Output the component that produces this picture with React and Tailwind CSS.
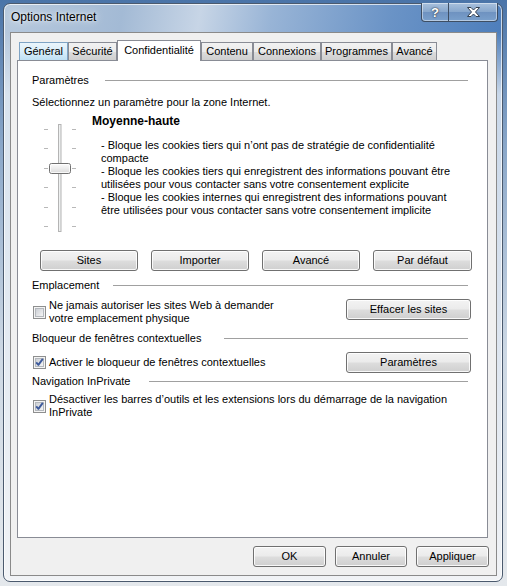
function Btn({ children, className = "" }) {
  return (
    <div
      className={`h-[21px] flex items-center justify-center rounded-[3px] border border-[#707070] bg-[linear-gradient(180deg,#f3f3f3_0%,#ebebeb_48%,#dddddd_52%,#cfcfcf_100%)] shadow-[inset_0_0_0_1px_rgba(255,255,255,0.85)] text-[11px] leading-[13px] text-black ${className}`}
    >
      {children}
    </div>
  );
}

function Check({ checked }) {
  return (
    <svg width="13" height="13" viewBox="0 0 13 13" className="shrink-0">
      <defs>
        <linearGradient id="cbg" x1="0" y1="0" x2="1" y2="1">
          <stop offset="0" stopColor="#c9cdd3" />
          <stop offset="1" stopColor="#f7f7f7" />
        </linearGradient>
      </defs>
      <rect x="0.5" y="0.5" width="12" height="12" fill="#f4f4f4" stroke="#8e8f8f" />
      <rect x="2.5" y="2.5" width="8" height="8" fill="url(#cbg)" stroke="#b4b8bd" />
      {checked && (
        <path
          d="M3.2 6.4 L5.4 8.9 L9.8 2.9"
          stroke="#3d5a9c"
          strokeWidth="1.9"
          fill="none"
          strokeLinejoin="round"
        />
      )}
    </svg>
  );
}

function Legend({ children, w }) {
  return (
    <div className="flex items-center h-[13px] mr-[3px]">
      <span className={`${w} shrink-0 leading-[13px]`}>{children}</span>
      <div className="flex-1 h-px bg-[#a0a0a0]" />
    </div>
  );
}

function Tab({ children, w, blue }) {
  return (
    <div
      className={`${w} h-[18px] flex items-center justify-center border border-b-0 ${
        blue
          ? "border-[#7ea3c4] bg-[linear-gradient(180deg,#eaf5fc_0%,#d9edf9_50%,#bfe0f4_100%)]"
          : "border-[#898c95] bg-[linear-gradient(180deg,#f2f2f2_0%,#ebebeb_50%,#dddddd_51%,#cfcfcf_100%)]"
      } text-[11px] leading-[13px]`}
    >
      {children}
    </div>
  );
}

function Slider() {
  const ticks = [16, 35, 55, 74, 94, 113];
  return (
    <svg width="60" height="122" viewBox="0 0 60 122" className="shrink-0">
      <defs>
        <linearGradient id="thumb" x1="0" y1="0" x2="0" y2="1">
          <stop offset="0" stopColor="#fdfdfd" />
          <stop offset="0.5" stopColor="#ececec" />
          <stop offset="1" stopColor="#d9d9d9" />
        </linearGradient>
      </defs>
      {ticks.map((y) => (
        <g key={y}>
          <rect x="12" y={y} width="4" height="1" fill="#b8b8b8" />
          <rect x="40" y={y} width="4" height="1" fill="#b8b8b8" />
        </g>
      ))}
      <rect x="26.5" y="11.5" width="2.5" height="107" fill="#eef0f0" stroke="#b4b4b4" />
      <rect x="17.5" y="50.5" width="21" height="10" rx="2" fill="url(#thumb)" stroke="#707070" />
      <rect x="18.5" y="51.5" width="19" height="8" rx="1" fill="none" stroke="#ffffff" strokeOpacity="0.8" />
    </svg>
  );
}

export default function App() {
  return (
    <div className="w-[507px] h-[586px] overflow-hidden pt-[3px] pl-[3px] bg-[linear-gradient(180deg,#4a74a8_0%,#8aa7c9_25%,#cdd8e4_60%,#e4e8ec_100%)] font-['Liberation_Sans',Arial,sans-serif] text-black">
      <div className="w-[500px] h-[579px] rounded-[7px] border border-[#4b5a6e] shadow-[inset_0_0_0_1px_rgba(255,255,255,0.7)] bg-[linear-gradient(180deg,rgba(240,244,248,0)_0px,rgba(240,244,248,0)_28px,rgba(222,231,241,0.85)_90px,#f1f3f6_100%),linear-gradient(100deg,#b7c9dd_0%,#a3bad5_20%,#c7d5e6_33%,#98b4d6_45%,#6a93c6_65%,#4c7dbb_85%,#4577b6_100%)] flex flex-col">
        {/* title bar */}
        <div className="h-[28px] flex justify-between items-start shrink-0">
          <div className="pl-[7px] h-[26px] leading-[26px] text-[12px] text-black [text-shadow:0_0_8px_rgba(255,255,255,0.95),0_0_3px_rgba(255,255,255,0.8)]">
            Options Internet
          </div>
          <div className="-mt-px mr-[4px] flex h-[19px] rounded-b-[4px] border border-[#3e4e63] border-t-0 overflow-hidden shadow-[inset_0_0_0_1px_rgba(255,255,255,0.45)] bg-[linear-gradient(180deg,#a9c1dd_0%,#86a6cc_50%,#6e92c0_51%,#7aa0cc_100%)]">
            <div className="w-[27px] h-full flex items-center justify-center border-r border-[#3e4e63] text-white font-bold text-[13px] leading-none [text-shadow:0_0_1px_#2a3340,0_0_2px_#2a3340]">
              ?
            </div>
            <div className="w-[48px] h-full flex items-center justify-center">
              <svg width="15" height="12" viewBox="0 0 15 12">
                <path
                  d="M1.5 1.5 H5 L7.5 4 L10 1.5 H13.5 L9.5 6 L13.5 10.5 H10 L7.5 8 L5 10.5 H1.5 L5.5 6 Z"
                  fill="#ffffff"
                  stroke="#34404f"
                  strokeWidth="1"
                  strokeLinejoin="round"
                />
              </svg>
            </div>
          </div>
        </div>

        {/* client area */}
        <div className="ml-[6px] w-[487px] h-[544px] border border-[#8a8a8a] bg-[#f0f0f0] flex flex-col">
          <div className="pt-[7px] pl-[6px]">
            {/* tabs */}
            <div className="flex items-end pl-[2px] h-[20px]">
              <Tab w="w-[49px]" blue>Général</Tab>
              <Tab w="w-[49px]">Sécurité</Tab>
              <div className="relative z-10 -mb-px w-[84px] h-[21px] flex items-center justify-center border border-b-0 border-[#898c95] bg-white text-[11px] leading-[13px] pb-[2px]">
                Confidentialité
              </div>
              <Tab w="w-[52px]">Contenu</Tab>
              <Tab w="w-[68px]">Connexions</Tab>
              <Tab w="w-[71px]">Programmes</Tab>
              <Tab w="w-[45px]">Avancé</Tab>
            </div>

            {/* panel */}
            <div className="w-[471px] h-[478px] border border-[#898c95] bg-white pl-[14px] pr-[16px] text-[11px] leading-[13px] flex flex-col">
              <div className="mt-[13px]">
                <Legend w="w-[73px]">Paramètres</Legend>
              </div>
              <div className="mt-[9px] h-[13px]">
                Sélectionnez un paramètre pour la zone Internet.
              </div>

              <div className="mt-[4px] flex">
                <Slider />
                <div className="flex flex-col">
                  <div className="h-[16px] leading-[16px] text-[12px] font-bold">Moyenne-haute</div>
                  <div className="mt-[10px] ml-[9px] leading-[13px]">
                    - Bloque les cookies tiers qui n’ont pas de stratégie de confidentialité
                    <br />
                    compacte
                    <br />- Bloque les cookies tiers qui enregistrent des informations pouvant être
                    <br />
                    utilisées pour vous contacter sans votre consentement explicite
                    <br />- Bloque les cookies internes qui enregistrent des informations pouvant
                    <br />
                    être utilisées pour vous contacter sans votre consentement implicite
                  </div>
                </div>
              </div>

              <div className="mt-[15px] ml-[8px] grid grid-cols-[98px_98px_98px_99px] gap-x-[13px] w-[432px]">
                <Btn>Sites</Btn>
                <Btn>Importer</Btn>
                <Btn>Avancé</Btn>
                <Btn>Par défaut</Btn>
              </div>

              <div className="mt-[8px]">
                <Legend w="w-[81px]">Emplacement</Legend>
              </div>
              <div className="mt-[7px] flex items-start justify-between">
                <div className="flex items-center ml-px">
                  <Check />
                  <div className="ml-[3px] leading-[13px]">
                    Ne jamais autoriser les sites Web à demander
                    <br />
                    votre emplacement physique
                  </div>
                </div>
                <Btn className="w-[125px]">Effacer les sites</Btn>
              </div>

              <div className="mt-[7px]">
                <Legend w="w-[192px]">Bloqueur de fenêtres contextuelles</Legend>
              </div>
              <div className="mt-[7px] flex items-center justify-between">
                <div className="flex items-center ml-px">
                  <Check checked />
                  <div className="ml-[3px] leading-[13px]">Activer le bloqueur de fenêtres contextuelles</div>
                </div>
                <Btn className="w-[125px]">Paramètres</Btn>
              </div>

              <div className="mt-[2px]">
                <Legend w="w-[117px]">Navigation InPrivate</Legend>
              </div>
              <div className="mt-[5px] flex items-center ml-px">
                <Check checked />
                <div className="ml-[3px] leading-[13px]">
                  Désactiver les barres d’outils et les extensions lors du démarrage de la navigation
                  <br />
                  InPrivate
                </div>
              </div>
            </div>

            {/* bottom buttons */}
            <div className="mt-[8px] flex justify-end gap-[9px] pr-[7px]">
              <Btn className="w-[73px]">OK</Btn>
              <Btn className="w-[72px]">Annuler</Btn>
              <Btn className="w-[73px]">Appliquer</Btn>
            </div>
          </div>
        </div>
      </div>
    </div>
  );
}
